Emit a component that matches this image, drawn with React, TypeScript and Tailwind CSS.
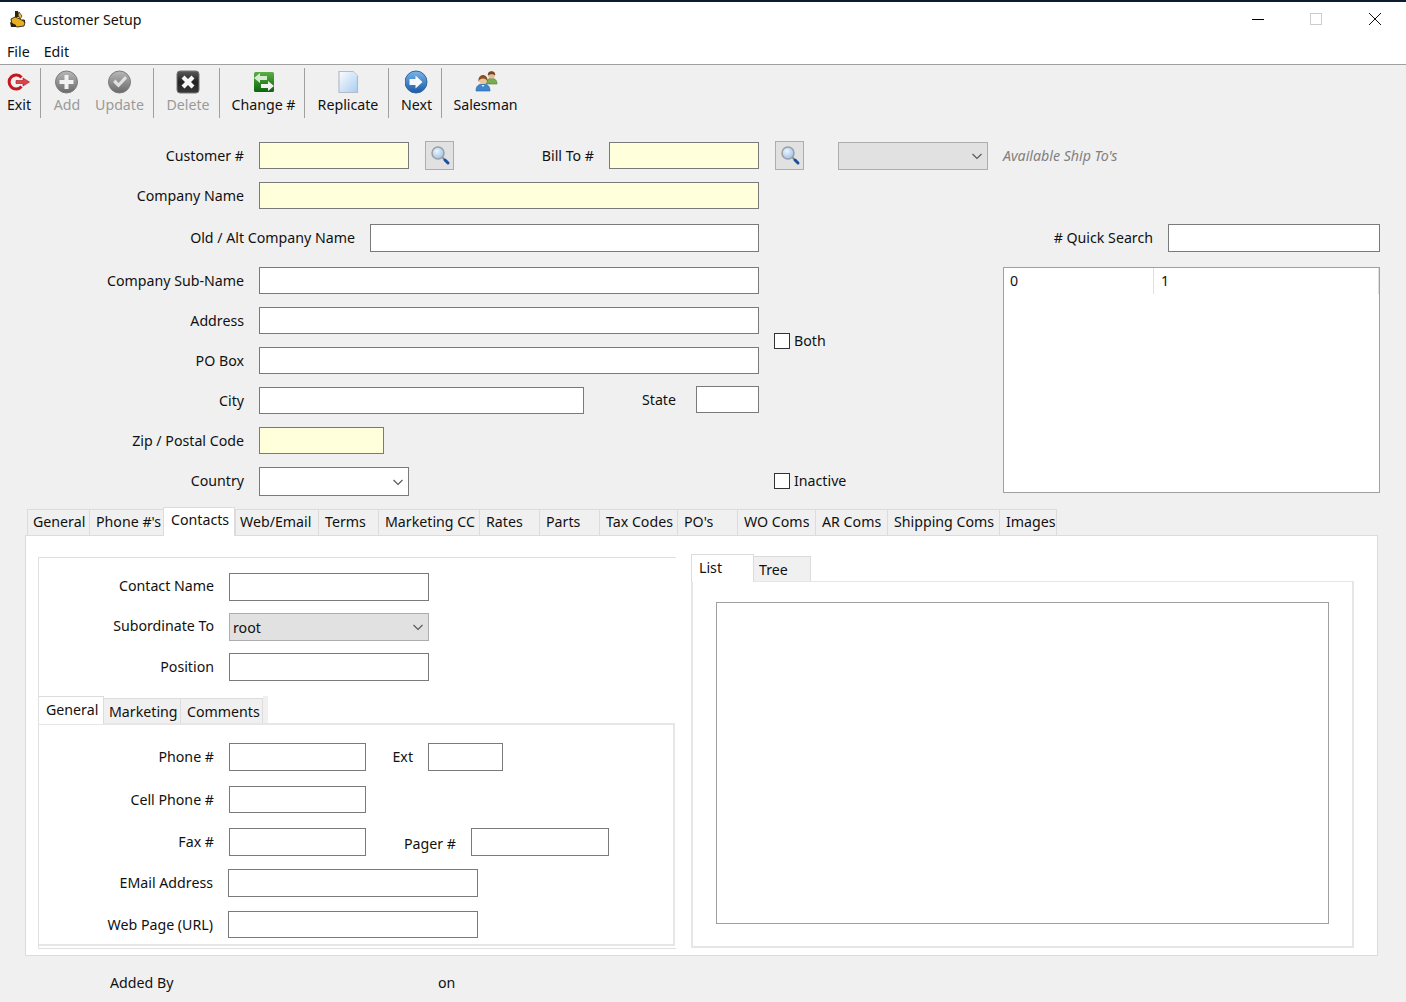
import { ReactNode } from 'react'

const font = "[font-family:'Noto_Sans','Open_Sans',sans-serif]"

function ExitIcon() {
    return (
        <svg width="24" height="24" viewBox="0 0 24 24">
            <path d="M14.500 7.500A7 7 0 1 0 14.500 16.500" fill="none" stroke="#c8161d" strokeWidth="3" />
            <path d="M9 10.500h7V8l6.500 4-6.500 4v-2.500H9z" fill="#e0424a" stroke="#a31218" strokeWidth="0.6" />
        </svg>
    )
}

function AddIcon() {
    return (
        <svg width="24" height="24" viewBox="0 0 24 24">
            <defs>
                <linearGradient id="grayBall" x1="0" y1="0" x2="0" y2="1">
                    <stop offset="0" stopColor="#b8b8b8" />
                    <stop offset="1" stopColor="#6a6a6a" />
                </linearGradient>
            </defs>
            <circle cx="11.500" cy="12" r="11" fill="url(#grayBall)" stroke="#7c7c7c" />
            <path d="M9.500 5h4v5H18.500v4H13.500v5h-4v-5H4.500v-4H9.500z" fill="#f2f2f2" />
        </svg>
    )
}

function UpdateIcon() {
    return (
        <svg width="24" height="24" viewBox="0 0 24 24">
            <circle cx="11.500" cy="12" r="11" fill="url(#grayBall)" stroke="#7c7c7c" />
            <path d="M5 12l2.500-2.500 3 3.500L17 6l2 2.500-8.500 9z" fill="#e2e2e2" />
        </svg>
    )
}

function DeleteIcon() {
    return (
        <svg width="24" height="24" viewBox="0 0 24 24">
            <defs>
                <linearGradient id="darkBox" x1="0" y1="0" x2="0" y2="1">
                    <stop offset="0" stopColor="#5a5a5a" />
                    <stop offset="0.5" stopColor="#222" />
                    <stop offset="1" stopColor="#3a3a3a" />
                </linearGradient>
            </defs>
            <rect x="1" y="1" width="22" height="22" rx="3" fill="url(#darkBox)" stroke="#777" />
            <path d="M5.500 8.500l3-3L12 9l3.500-3.500 3 3L15 12l3.500 3.500-3 3L12 15l-3.500 3.500-3-3L9 12z" fill="#f7f7f7" />
        </svg>
    )
}

function ChangeIcon() {
    return (
        <svg width="22" height="22" viewBox="0 0 22 22">
            <defs>
                <linearGradient id="greenBox" x1="0" y1="0" x2="0" y2="1">
                    <stop offset="0" stopColor="#5cae45" />
                    <stop offset="1" stopColor="#0b650b" />
                </linearGradient>
            </defs>
            <rect x="1" y="1" width="20" height="20" rx="1.500" fill="url(#greenBox)" />
            <path d="M1 7l6-5v3h7v4H7v3z" fill="#d4ecd0" />
            <path d="M21 15l-6-5v3H8v4h7v3z" fill="#f2f2f2" />
        </svg>
    )
}

function ReplicateIcon() {
    return (
        <svg width="22" height="24" viewBox="0 0 22 24">
            <defs>
                <linearGradient id="sheet" x1="0" y1="0" x2="1" y2="1">
                    <stop offset="0" stopColor="#fbfdff" />
                    <stop offset="1" stopColor="#a9cdf0" />
                </linearGradient>
            </defs>
            <path d="M2 1.500h14l4.500 4.500v16.500H2z" fill="url(#sheet)" stroke="#b4bcc6" strokeWidth="1.200" />
            <path d="M16 1.500V6h4.500z" fill="#dfe8f0" />
        </svg>
    )
}

function NextIcon() {
    return (
        <svg width="24" height="24" viewBox="0 0 24 24">
            <defs>
                <linearGradient id="blueBall" x1="0" y1="0" x2="0" y2="1">
                    <stop offset="0" stopColor="#7ab4e8" />
                    <stop offset="1" stopColor="#1a5aa2" />
                </linearGradient>
            </defs>
            <circle cx="11" cy="12" r="11" fill="url(#blueBall)" stroke="#2b66a6" />
            <path d="M4.500 9h6V5.500l7 6.500-7 6.500V15h-6z" fill="#f6f9fc" />
        </svg>
    )
}

function SalesmanIcon() {
    return (
        <svg width="24" height="24" viewBox="0 0 24 24">
            <path d="M12 14c0-4 2-5.500 5.500-5.500S23 10 23 14z" fill="#78ad4e" stroke="#4c7a2e" strokeWidth="0.6" />
            <circle cx="17.500" cy="5" r="3.500" fill="#e3bd96" />
            <path d="M14 5a3.500 3.500 0 0 1 7 0c-1-1.500-5-1.500-7 0z" fill="#7a4a22" stroke="#6a3d18" strokeWidth="0.6" />
            <path d="M2 21c0-5 2.500-7 7-7s7 2 7 7z" fill="#3f86cf" stroke="#2a5f9c" strokeWidth="0.6" />
            <circle cx="9" cy="10" r="4" fill="#ebc49c" />
            <path d="M4.500 12c-.5-5 2-7 4.500-7s5 2 4.500 7c-.5-2-2-3.500-4.500-3.500S5 10 4.500 12z" fill="#8a4f22" />
            <path d="M7.500 15l1.500 2 1.500-2z" fill="#f4f4f4" />
        </svg>
    )
}

function SearchButton() {
    return (
        <button className="w-[29px] h-[29px] flex items-center justify-center border border-[#adadad] bg-[#e1e1e1]">
            <svg width="22" height="22" viewBox="0 0 22 22">
                <defs>
                    <radialGradient id="lens" cx="0.4" cy="0.35" r="0.7">
                        <stop offset="0" stopColor="#eef6fc" />
                        <stop offset="1" stopColor="#96c0ea" />
                    </radialGradient>
                </defs>
                <circle cx="9" cy="8" r="6" fill="url(#lens)" stroke="#9aa0a6" strokeWidth="1.500" />
                <path d="M13.500 12.500l2 2" stroke="#8a8f96" strokeWidth="2" />
                <path d="M16 15l3 3" stroke="#1d4fa0" strokeWidth="3" strokeLinecap="round" />
            </svg>
        </button>
    )
}

function AppIcon() {
    return (
        <svg width="18" height="18" viewBox="0 0 18 18">
            <path d="M2 9l4-2 5 2 5 3-1 4-7 1-5-3z" fill="#e8b021" stroke="#2e2210" strokeWidth="0.9" />
            <path d="M6 1h3l1 6H6z" fill="#2e2210" />
            <path d="M10 2l3 4-2 3-2-4z" fill="#f0c030" stroke="#2e2210" strokeWidth="0.7" />
            <path d="M1 12l6 3v2H2z" fill="#2a2018" />
            <path d="M13 9l3 1v3z" fill="#2e2210" />
        </svg>
    )
}

const tools: { label: string; width: string; disabled?: boolean; sep?: boolean; icon: ReactNode }[] = [
    { label: 'Exit', width: 'w-[24px]', sep: true, icon: <ExitIcon /> },
    { label: 'Add', width: 'w-[28px]', disabled: true, icon: <AddIcon /> },
    { label: 'Update', width: 'w-[49px]', disabled: true, sep: true, icon: <UpdateIcon /> },
    { label: 'Delete', width: 'w-[44px]', disabled: true, sep: true, icon: <DeleteIcon /> },
    { label: 'Change #', width: 'w-[63px]', sep: true, icon: <ChangeIcon /> },
    { label: 'Replicate', width: 'w-[62px]', sep: true, icon: <ReplicateIcon /> },
    { label: 'Next', width: 'w-[31px]', sep: true, icon: <NextIcon /> },
    { label: 'Salesman', width: 'w-[63px]', icon: <SalesmanIcon /> },
]

const mainTabs = [
    ['General', 'w-[62px] pl-[5px]'],
    ["Phone #'s", 'w-[74px] pl-[6px]'],
    ['Contacts', 'w-[72px]'],
    ['Web/Email', 'w-[83px] pl-[4px]'],
    ['Terms', 'w-[60px] pl-[6px]'],
    ['Marketing CC', 'w-[101px] pl-[6px]'],
    ['Rates', 'w-[60px] pl-[6px]'],
    ['Parts', 'w-[60px] pl-[6px]'],
    ['Tax Codes', 'w-[78px] pl-[6px]'],
    ["PO's", 'w-[60px] pl-[6px]'],
    ['WO Coms', 'w-[78px] pl-[6px]'],
    ['AR Coms', 'w-[72px] pl-[6px]'],
    ['Shipping Coms', 'w-[112px] pl-[6px]'],
    ['Images', 'w-[58px] pl-[6px]'],
]

function ToolbarItem({ tool }: { tool: (typeof tools)[number] }) {
    return (
        <>
            <div className={`${tool.width} flex flex-col items-center ${tool.sep ? 'mr-[9px]' : 'mr-[14px]'}`}>
                <div className="h-[24px] w-[24px] mt-[5px] flex items-center justify-center shrink-0">{tool.icon}</div>
                <span className={`mt-px leading-[20px] whitespace-nowrap ${tool.disabled ? 'text-[#9a9a9a]' : 'text-[#111]'}`}>
                    {tool.label}
                </span>
            </div>
            {tool.sep && <div className="w-px h-[50px] mt-[3px] mr-[12px] bg-[#a0a0a0]" />}
        </>
    )
}

// shift nudges the text a pixel or so inside its row
function Label({ width, shift = 'pb-0', children }: { width: string; shift?: string; children: ReactNode }) {
    return <label className={`${width} ${shift} shrink-0 text-right whitespace-nowrap text-[#111] mr-[15px]`}>{children}</label>
}

function Box({ width, height = 'h-[27px]', yellow }: { width: string; height?: string; yellow?: boolean }) {
    return <input className={`${width} ${height} shrink-0 border border-[#7a7a7a] ${yellow ? 'bg-[#ffffdc]' : 'bg-white'}`} />
}

function Combo({ width, height, fill, text }: { width: string; height: string; fill?: boolean; text?: string }) {
    return (
        <div className={`${width} ${height} shrink-0 flex items-center justify-between pl-[3px] pr-[4px] border ${fill ? 'bg-[#e1e1e1] border-[#adadad]' : 'bg-white border-[#7a7a7a]'}`}>
            <span className="mt-px">{text}</span>
            <svg width="12" height="12" viewBox="0 0 12 12">
                <path d="M1.500 4l4.500 4.500L10.500 4" fill="none" stroke="#555" strokeWidth="1.100" />
            </svg>
        </div>
    )
}

function Check({ label }: { label: string }) {
    return (
        <div className="flex items-center h-[16px]">
            <div className="w-[16px] h-[16px] border border-[#333] bg-white mr-[4px]" />
            <span className="text-[#111] pb-px">{label}</span>
        </div>
    )
}

export default function App() {
    return (
        <div className={`w-[1406px] h-[1002px] overflow-hidden bg-[#f0f0f0] text-[14.2px] leading-[20px] text-[#111] ${font}`}>
            <div className="h-[2px] bg-[#0b1c33]" />

            {/* title bar */}
            <div className="h-[34px] bg-white flex items-center justify-between">
                <div className="flex items-center pl-[9px] gap-[7px]">
                    <AppIcon />
                    <span className="mt-[2px]">Customer Setup</span>
                </div>
                <div className="flex items-center pr-[25px]">
                    <div className="w-[12px] h-px bg-black mr-[46px]" />
                    <div className="w-[12px] h-[12px] border border-[#ccc] mr-[47px]" />
                    <svg width="12" height="12" viewBox="0 0 12 12">
                        <path d="M0 0l12 12M12 0L0 12" stroke="#111" strokeWidth="1" />
                    </svg>
                </div>
            </div>
            <div className="h-[28px] bg-white flex items-center pl-[7px] pt-[4px] gap-[14px]">
                <span>File</span>
                <span>Edit</span>
            </div>
            <div className="h-px bg-[#a0a0a0]" />

            {/* toolbar */}
            <div className="h-[58px] flex pl-[7px]">
                {tools.map(t => (
                    <ToolbarItem tool={t} key={t.label} />
                ))}
            </div>

            {/* customer form */}
            <div className="pt-[19px]">
                <div className="flex items-center h-[27px]">
                    <Label width="w-[244px]">Customer #</Label>
                    <Box width="w-[150px]" yellow />
                    <div className="ml-[16px]"><SearchButton /></div>
                    <Label width="w-[140px]">Bill To #</Label>
                    <Box width="w-[150px]" yellow />
                    <div className="ml-[16px]"><SearchButton /></div>
                    <div className="ml-[34px]"><Combo width="w-[150px]" height="h-[28px]" fill /></div>
                    <span className="ml-[15px] italic text-[#808080]">Available Ship To's</span>
                </div>
                <div className="flex items-center h-[27px] mt-[13px]">
                    <Label width="w-[244px]">Company Name</Label>
                    <Box width="w-[500px]" yellow />
                </div>
                <div className="flex items-center h-[28px] mt-[15px]">
                    <Label width="w-[355px]">Old / Alt Company Name</Label>
                    <Box width="w-[389px]" height="h-[28px]" />
                    <Label width="w-[394px]"># Quick Search</Label>
                    <Box width="w-[212px]" height="h-[28px]" />
                </div>

                <div className="flex mt-[15px] h-[229px]">
                    <div className="w-[759px] shrink-0">
                        <div className="flex items-center h-[27px]">
                            <Label width="w-[244px]">Company Sub-Name</Label>
                            <Box width="w-[500px]" />
                        </div>
                        <div className="flex items-center h-[27px] mt-[13px]">
                            <Label width="w-[244px]">Address</Label>
                            <Box width="w-[500px]" />
                        </div>
                        <div className="flex items-center h-[27px] mt-[13px]">
                            <Label width="w-[244px]">PO Box</Label>
                            <Box width="w-[500px]" />
                        </div>
                        <div className="flex items-center h-[27px] mt-[13px]">
                            <Label width="w-[244px]">City</Label>
                            <Box width="w-[325px]" />
                            <Label width="w-[92px]" shift="pb-px">State</Label>
                            <div className="ml-[5px] -mt-[2px]"><Box width="w-[63px]" /></div>
                        </div>
                        <div className="flex items-center h-[27px] mt-[13px]">
                            <Label width="w-[244px]">Zip / Postal Code</Label>
                            <Box width="w-[125px]" yellow />
                        </div>
                        <div className="flex items-center h-[29px] mt-[13px]">
                            <Label width="w-[244px]" shift="pb-px">Country</Label>
                            <Combo width="w-[150px]" height="h-[29px]" />
                        </div>
                    </div>
                    <div className="w-[229px] ml-[15px] pt-[66px] shrink-0">
                        <Check label="Both" />
                        <div className="mt-[124px]"><Check label="Inactive" /></div>
                    </div>
                    <div className="w-[377px] h-[226px] bg-white border border-[#a0a0a0] shrink-0">
                        <div className="flex h-[26px] items-center">
                            <div className="w-[150px] h-full pl-[6px] pt-[3px] border-r border-[#e0e0e0]">0</div>
                            <div className="flex-1 h-full pl-[7px] pt-[3px] border-r border-[#e0e0e0]">1</div>
                        </div>
                    </div>
                </div>
            </div>

            {/* main tabs */}
            <div className="flex items-end h-[28px] pl-[27px] mt-[11px]">
                {mainTabs.map(([name, w]) => (
                    name === 'Contacts' ? (
                        <div key={name} className={`${w} h-[29px] -mb-px relative z-10 bg-white border border-b-0 border-[#dcdcdc] pl-[7px] pt-[2px]`}>{name}</div>
                    ) : (
                        <div key={name} className={`${w} h-[26px] border-t border-l border-r-0 last:border-r border-[#dcdcdc] pt-[2px] whitespace-nowrap`}>{name}</div>
                    )
                ))}
            </div>
            <div className="ml-[25px] w-[1353px] h-[421px] bg-white border border-[#dcdcdc] flex pl-[12px] pt-[21px]">
                {/* contact details */}
                <div className="w-[638px] h-[392px] shrink-0 border-l border-t border-b border-[#e0e0e0]">
                    <div className="flex items-center h-[28px] mt-[15px]">
                        <Label width="w-[175px]" shift="pb-[3px]">Contact Name</Label>
                        <Box width="w-[200px]" height="h-[28px]" />
                    </div>
                    <div className="flex items-center h-[28px] mt-[12px]">
                        <Label width="w-[175px]" shift="pb-[3px]">Subordinate To</Label>
                        <Combo width="w-[200px]" height="h-[28px]" fill text="root" />
                    </div>
                    <div className="flex items-center h-[28px] mt-[12px]">
                        <Label width="w-[175px]" shift="pb-px">Position</Label>
                        <Box width="w-[200px]" height="h-[28px]" />
                    </div>

                    <div className="flex items-end h-[27px] mt-[15px]">
                        <div className="w-[65px] h-[28px] -mb-px relative z-10 bg-white border-t border-r border-[#dcdcdc] pl-[7px] pt-[3px]">General</div>
                        <div className="w-[77px] h-[25px] bg-[#f0f0f0] border-t border-r border-[#dcdcdc] pl-[5px] pt-[3px]">Marketing</div>
                        <div className="w-[82px] h-[25px] bg-[#f0f0f0] border-t border-r border-[#dcdcdc] pl-[6px] pt-[3px]">Comments</div>
                        <div className="w-[5px] h-[27px] bg-[#f0f0f0]" />
                    </div>
                    <div className="w-[636px] h-[223px] border-2 border-l-0 border-[#e6e6e6] pt-[18px]">
                        <div className="flex items-center h-[28px]">
                            <Label width="w-[175px]" shift="pb-px">Phone #</Label>
                            <Box width="w-[137px]" height="h-[28px]" />
                            <Label width="w-[47px]" shift="pb-px">Ext</Label>
                            <Box width="w-[75px]" height="h-[28px]" />
                        </div>
                        <div className="flex items-center h-[27px] mt-[15px]">
                            <Label width="w-[175px]">Cell Phone #</Label>
                            <Box width="w-[137px]" />
                        </div>
                        <div className="flex items-center h-[28px] mt-[15px]">
                            <Label width="w-[175px]" shift="pb-px">Fax #</Label>
                            <Box width="w-[137px]" height="h-[28px]" />
                            <Label width="w-[90px]" shift="pt-[3px]">Pager #</Label>
                            <Box width="w-[138px]" height="h-[28px]" />
                        </div>
                        <div className="flex items-center h-[28px] mt-[13px]">
                            <Label width="w-[174px]">EMail Address</Label>
                            <Box width="w-[250px]" height="h-[28px]" />
                        </div>
                        <div className="flex items-center h-[27px] mt-[14px]">
                            <Label width="w-[174px]">Web Page (URL)</Label>
                            <Box width="w-[250px]" />
                        </div>
                    </div>
                </div>

                {/* list / tree */}
                <div className="ml-[15px] -mt-[3px] w-[663px] shrink-0">
                    <div className="flex items-end h-[27px]">
                        <div className="w-[63px] h-[28px] -mb-px relative z-10 bg-white border border-b-0 border-[#dcdcdc] pl-[7px] pt-[3px]">List</div>
                        <div className="w-[57px] h-[25px] bg-[#f0f0f0] border-t border-r border-[#dcdcdc] pl-[5px] pt-[3px]">Tree</div>
                    </div>
                    <div className="h-[367px] border-2 border-[#e6e6e6] border-t pl-[23px] pt-[20px]">
                        <div className="w-[613px] h-[322px] border border-[#a0a0a0]" />
                    </div>
                </div>
            </div>

            {/* footer */}
            <div className="flex h-[22px] mt-[16px] pl-[110px] items-center">
                <span className="w-[328px]">Added By</span>
                <span>on</span>
            </div>
        </div>
    )
}
